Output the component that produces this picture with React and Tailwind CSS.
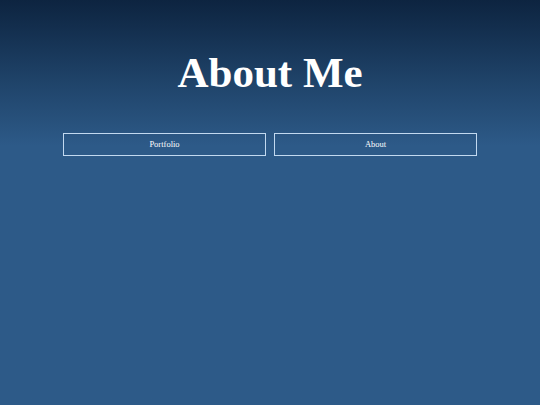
export default function App() {
  return (
    <div
      className="min-h-screen w-full bg-linear-to-b from-[#0d2440] via-[#1f4369] via-20% to-[#2d5a88] to-36% text-white"
      style={{ minHeight: '405px' }}
    >
      <div className="flex flex-col items-center pt-[47px]" style={{ fontFamily: '"Liberation Serif", "DejaVu Serif", serif' }}>
        <h1 className="text-[43px] leading-[52px] font-bold">About Me</h1>
        <nav className="mt-[34px] flex gap-2">
          <a className="flex h-[23px] w-[203px] items-center justify-center border border-[#c2d9f0] text-[8.5px]">
            Portfolio
          </a>
          <a className="flex h-[23px] w-[203px] items-center justify-center border border-[#c2d9f0] text-[8.5px]">
            About
          </a>
        </nav>
      </div>
    </div>
  );
}
